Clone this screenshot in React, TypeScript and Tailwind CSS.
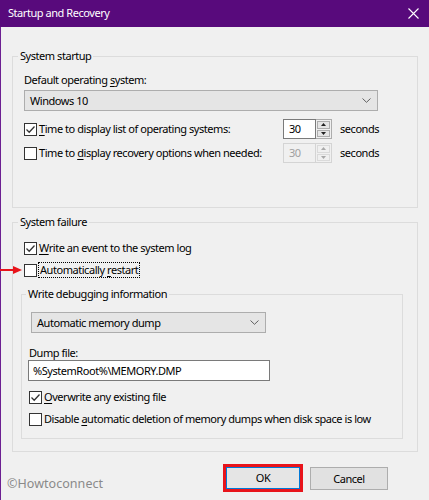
import React from "react";

const FONT = { fontFamily: '"Noto Sans", "Open Sans", Arial, sans-serif' };

function Check({ checked }: { checked?: boolean }) {
  return (
    <span className="w-[13px] h-[13px] shrink-0 border border-[#333333] bg-white flex items-center justify-center">
      {checked && (
        <svg width="11" height="11" viewBox="0 0 11 11">
          <path d="M1.5 5.5 L4.2 8.2 L9.5 2.5" fill="none" stroke="#333333" strokeWidth="1.3" />
        </svg>
      )}
    </span>
  );
}

function Chevron() {
  return (
    <svg width="9" height="5" viewBox="0 0 9 5">
      <path d="M0.5 0.5 L4.5 4.3 L8.5 0.5" fill="none" stroke="#606060" strokeWidth="1" />
    </svg>
  );
}

function Combo({ label, w }: { label: string; w: string }) {
  return (
    <div className={`${w} h-[21px] bg-[#e5e5e5] border border-[#adadad] flex items-center justify-between pl-[5px] pr-[6px]`}>
      <span>{label}</span>
      <Chevron />
    </div>
  );
}

function Spin({ disabled }: { disabled?: boolean }) {
  const tri = disabled ? "#a8a8a8" : "#202020";
  const btn = disabled
    ? "border-[#dadada] bg-[#f0f0f0]"
    : "border-[#adadad] bg-[#e5e5e5]";
  return (
    <div className="flex h-[20px] w-[49px]">
      <div
        className={`w-[33px] h-full flex items-center pl-[5px] border ${
          disabled ? "border-[#d4d4d4] bg-[#f0f0f0] text-[#a0a0a0]" : "border-[#7a7a7a] bg-white text-black"
        }`}
      >
        30
      </div>
      <div className={`w-[16px] h-full flex flex-col gap-[1px] p-[1px] border-y border-r ${disabled ? "border-[#d4d4d4]" : "border-[#adadad]"}`}>
        <div className={`flex-1 border ${btn} flex items-center justify-center`}>
          <svg width="5" height="3" viewBox="0 0 5 3">
            <path d="M0 3 L2.5 0 L5 3 Z" fill={tri} />
          </svg>
        </div>
        <div className={`flex-1 border ${btn} flex items-center justify-center`}>
          <svg width="5" height="3" viewBox="0 0 5 3">
            <path d="M0 0 L2.5 3 L5 0 Z" fill={tri} />
          </svg>
        </div>
      </div>
    </div>
  );
}

function U({ c }: { c: string }) {
  return <span className="underline underline-offset-[2px]">{c}</span>;
}

export default function App() {
  return (
    <div
      className="w-[429px] h-[500px] bg-[#f0f0f0] flex flex-col overflow-hidden relative text-[11px] text-black tracking-[-0.45px]"
      style={FONT}
    >
      {/* title bar */}
      <div className="h-[27px] shrink-0 bg-[#580a7c] flex items-center justify-between pl-[8px] pr-[10px] text-white text-[11px]">
        <span>Startup and Recovery</span>
        <svg width="11" height="11" viewBox="0 0 11 11">
          <path d="M0.5 0.5 L10.5 10.5 M10.5 0.5 L0.5 10.5" stroke="#ffffff" strokeWidth="1.1" />
        </svg>
      </div>

      <div className="flex-1 border-l border-[#6c1f92] flex flex-col pl-[11px] leading-[16px]">
        {/* System startup */}
        <fieldset className="mt-[21px] w-[406px] border border-[#dcdcdc] p-0 m-0">
          <legend className="ml-[5px] px-[2px] leading-[16px]">System startup</legend>
          <div className="pt-[8px] pl-[11px] pb-[44px]">
            <div className="h-[16px]">
              Default operating <U c="s" />ystem:
            </div>
            <div className="mt-[2px]">
              <Combo label="Windows 10" w="w-[354px]" />
            </div>
            <div className="mt-[8px] h-[20px] flex items-center">
              <div className="w-[259px] flex items-center gap-[2px]">
                <Check checked />
                <span>
                  <U c="T" />ime to display list of operating systems:
                </span>
              </div>
              <Spin />
              <span className="ml-[8px]">seconds</span>
            </div>
            <div className="mt-[4px] h-[20px] flex items-center">
              <div className="w-[259px] flex items-center gap-[2px]">
                <Check />
                <span>
                  Time to <U c="d" />isplay recovery options when needed:
                </span>
              </div>
              <Spin disabled />
              <span className="ml-[8px]">seconds</span>
            </div>
          </div>
        </fieldset>

        {/* System failure */}
        <fieldset className="mt-[6px] w-[406px] border border-[#dcdcdc] p-0 m-0">
          <legend className="ml-[5px] px-[2px] leading-[16px]">System failure</legend>
          <div className="pt-[10px] pl-[11px] pb-[12px]">
            <div className="h-[16px] flex items-center gap-[2px]">
              <Check checked />
              <span>
                <U c="W" />rite an event to the system log
              </span>
            </div>
            <div className="mt-[6px] h-[16px] flex items-center gap-[1px]">
              <Check />
              <span className="border border-dotted border-black leading-[14px] px-[1px]">
                Automatically <U c="r" />estart
              </span>
            </div>

            <fieldset className="mt-[8px] -ml-[3px] w-[382px] border border-[#dcdcdc] p-0 m-0">
              <legend className="ml-[4px] px-[2px] leading-[16px]">Write debugging information</legend>
              <div className="pt-[10px] pl-[9px] pb-[11px]">
                <Combo label="Automatic memory dump" w="w-[235px]" />
                <div className="mt-[13px] leading-[14px] -ml-[2px]">Dump file:</div>
                <div className="-ml-[3px] w-[242px] h-[21px] bg-white border border-[#7a7a7a] flex items-center pl-[4px]">
                  %SystemRoot%\MEMORY.DMP
                </div>
                <div className="mt-[8px] -ml-[2px] h-[16px] flex items-center gap-[2px]">
                  <Check checked />
                  <span>
                    <U c="O" />verwrite any existing file
                  </span>
                </div>
                <div className="mt-[6px] -ml-[2px] h-[16px] flex items-center gap-[2px]">
                  <Check />
                  <span>
                    Disable <U c="a" />utomatic deletion of memory dumps when disk space is low
                  </span>
                </div>
              </div>
            </fieldset>
          </div>
        </fieldset>

        {/* buttons */}
        <div className="mt-[12px] flex items-start">
          <span className="-ml-[5px] mt-[12px] text-[12.5px] tracking-[0.05px] text-[#8a8a8a]">©Howtoconnect</span>
          <div className="ml-auto w-[80px] h-[28px] border-[3px] border-[#e8141b]">
            <div className="w-full h-full border border-[#0078d7] bg-[#e5e5e5] flex items-center justify-center">
              OK
            </div>
          </div>
          <div className="ml-[7px] mr-[41px] mt-[3px] w-[78px] h-[23px] bg-[#e1e1e1] border border-[#adadad] flex items-center justify-center">
            Cancel
          </div>
        </div>
      </div>

      {/* annotation arrow */}
      <svg className="absolute left-0 top-[264px]" width="24" height="12" viewBox="0 0 24 12">
        <path d="M0 6 L15 6" stroke="#e8141b" strokeWidth="2" />
        <path d="M13 2 L22 6 L13 10 Z" fill="#e8141b" />
      </svg>
    </div>
  );
}
